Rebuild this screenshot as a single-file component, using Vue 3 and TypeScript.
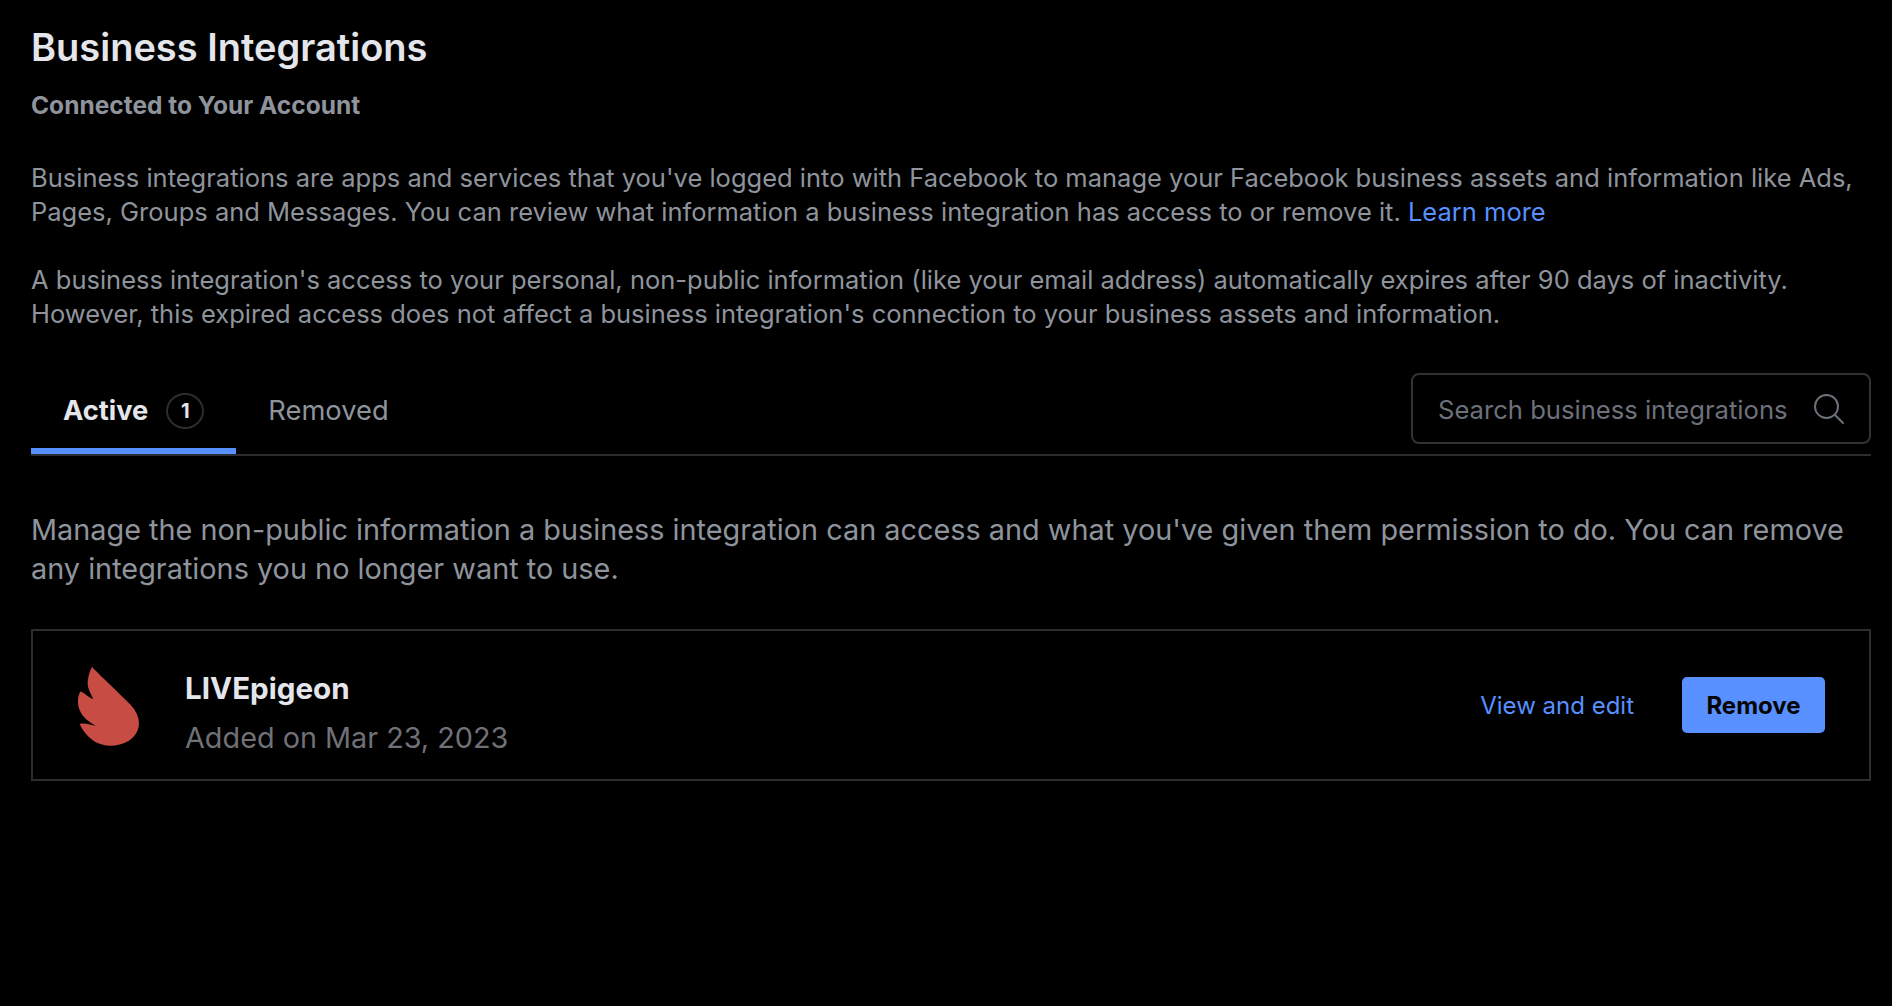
<script setup lang="ts">
const tabs = [
  { label: 'Active', count: 1, active: true },
  { label: 'Removed', count: 0, active: false },
];
</script>

<template>
  <main class="page">
    <h1 class="title">Business Integrations</h1>
    <h2 class="subtitle">Connected to Your Account</h2>
    <p class="intro">
      Business integrations are apps and services that you've logged into with Facebook to manage your Facebook business assets and information like Ads,<br />
      Pages, Groups and Messages. You can review what information a business integration has access to or remove it.
      <a class="link">Learn more</a>
    </p>
    <p class="intro">
      A business integration's access to your personal, non-public information (like your email address) automatically expires after 90 days of inactivity.<br />
      However, this expired access does not affect a business integration's connection to your business assets and information.
    </p>

    <div class="tabbar">
      <div class="tabs">
        <div v-for="tab in tabs" :key="tab.label" class="tab" :class="{ 'tab--active': tab.active }">
          <span>{{ tab.label }}</span>
          <span v-if="tab.count" class="tab-count">{{ tab.count }}</span>
        </div>
      </div>
      <div class="search">
        <span class="search-text">Search business integrations</span>
        <svg class="search-icon" viewBox="0 0 32 32" fill="none" stroke="#6d717a" stroke-width="2" stroke-linecap="round">
          <circle cx="13.5" cy="13.5" r="11.5" />
          <path d="M22 22l8 8" />
        </svg>
      </div>
    </div>

    <p class="manage">
      Manage the non-public information a business integration can access and what you've given them permission to do. You can remove<br />
      any integrations you no longer want to use.
    </p>

    <section class="card">
      <svg class="logo" viewBox="55 55 185 236">
        <path
          fill="#c74c43"
          d="M97 55C112 72 170 125 212 168C232 190 240 212 236 234C228 270 192 290 150 290C110 290 76 262 60 225C76 220 94 230 108 230C90 222 68 205 59 182C52 162 54 142 62 128C74 130 90 150 100 150C92 132 82 118 84 98C86 80 90 66 97 55Z"
        />
      </svg>
      <div class="info">
        <div class="name">LIVEpigeon</div>
        <div class="added">Added on Mar 23, 2023</div>
      </div>
      <a class="link view">View and edit</a>
      <button type="button" class="remove">Remove</button>
    </section>
  </main>
</template>

<style>
html,
body {
  background: #000;
}
</style>

<style scoped>
.page {
  box-sizing: border-box;
  min-height: 1006px;
  padding: 24px 21px 0 31px;
  background: #000;
  font-family: Inter, "Liberation Sans", sans-serif;
}
.title {
  margin: 0;
  font-size: 38px;
  line-height: 46px;
  font-weight: 600;
  color: #e4e6eb;
}
.subtitle {
  margin: 20px 0 0;
  font-size: 24.5px;
  line-height: 30px;
  font-weight: 700;
  color: #8f949c;
}
.intro {
  margin: 41px 0 0;
  font-size: 25.5px;
  line-height: 34px;
  color: #8f949c;
}
.intro + .intro {
  margin-top: 34px;
}
.link {
  color: #5890ff;
}
.tabbar {
  display: flex;
  justify-content: space-between;
  margin-top: 42px;
  height: 81px;
  border-bottom: 2px solid #2c2d31;
}
.tabs {
  display: flex;
  height: 81px;
}
.tab {
  display: flex;
  align-items: center;
  gap: 18px;
  box-sizing: border-box;
  height: 81px;
  padding: 0 32px;
  border-bottom: 6px solid transparent;
  font-size: 27.3px;
  color: #8f949c;
}
.tab--active {
  font-weight: 700;
  color: #e4e6eb;
  border-bottom-color: #5890ff;
}
.tab-count {
  box-sizing: border-box;
  display: flex;
  align-items: center;
  justify-content: center;
  width: 38px;
  height: 36px;
  border: 2px solid #2c2d31;
  border-radius: 50%;
  font-size: 20px;
}
.search {
  box-sizing: border-box;
  display: flex;
  align-items: center;
  justify-content: space-between;
  width: 460px;
  height: 71px;
  padding: 0 24px 0 25px;
  border: 2px solid #303236;
  border-radius: 8px;
}
.search-text {
  padding-top: 2px;
  font-size: 25.6px;
  color: #6d717a;
}
.search-icon {
  width: 32px;
  height: 32px;
}
.manage {
  margin: 54px 0 0;
  font-size: 28.85px;
  line-height: 39px;
  color: #8f949c;
}
.card {
  box-sizing: border-box;
  display: flex;
  align-items: center;
  height: 152px;
  margin-top: 41px;
  padding: 0 44px 0 45px;
  border: 2px solid #2c2d31;
}
.logo {
  width: 62px;
  height: 79px;
  margin: 2px 45px 0 0;
}
.info {
  flex: 1;
  padding-top: 16px;
}
.name {
  font-size: 29.6px;
  line-height: 38px;
  font-weight: 700;
  color: #e4e6eb;
}
.added {
  margin-top: 12px;
  font-size: 28.8px;
  line-height: 38px;
  color: #6f7176;
}
.view {
  font-size: 24px;
  margin-right: 48px;
}
.remove {
  width: 143px;
  height: 56px;
  border: 0;
  border-radius: 5px;
  background: #5890ff;
  color: #050505;
  font: 700 24px Inter, "Liberation Sans", sans-serif;
}
</style>
